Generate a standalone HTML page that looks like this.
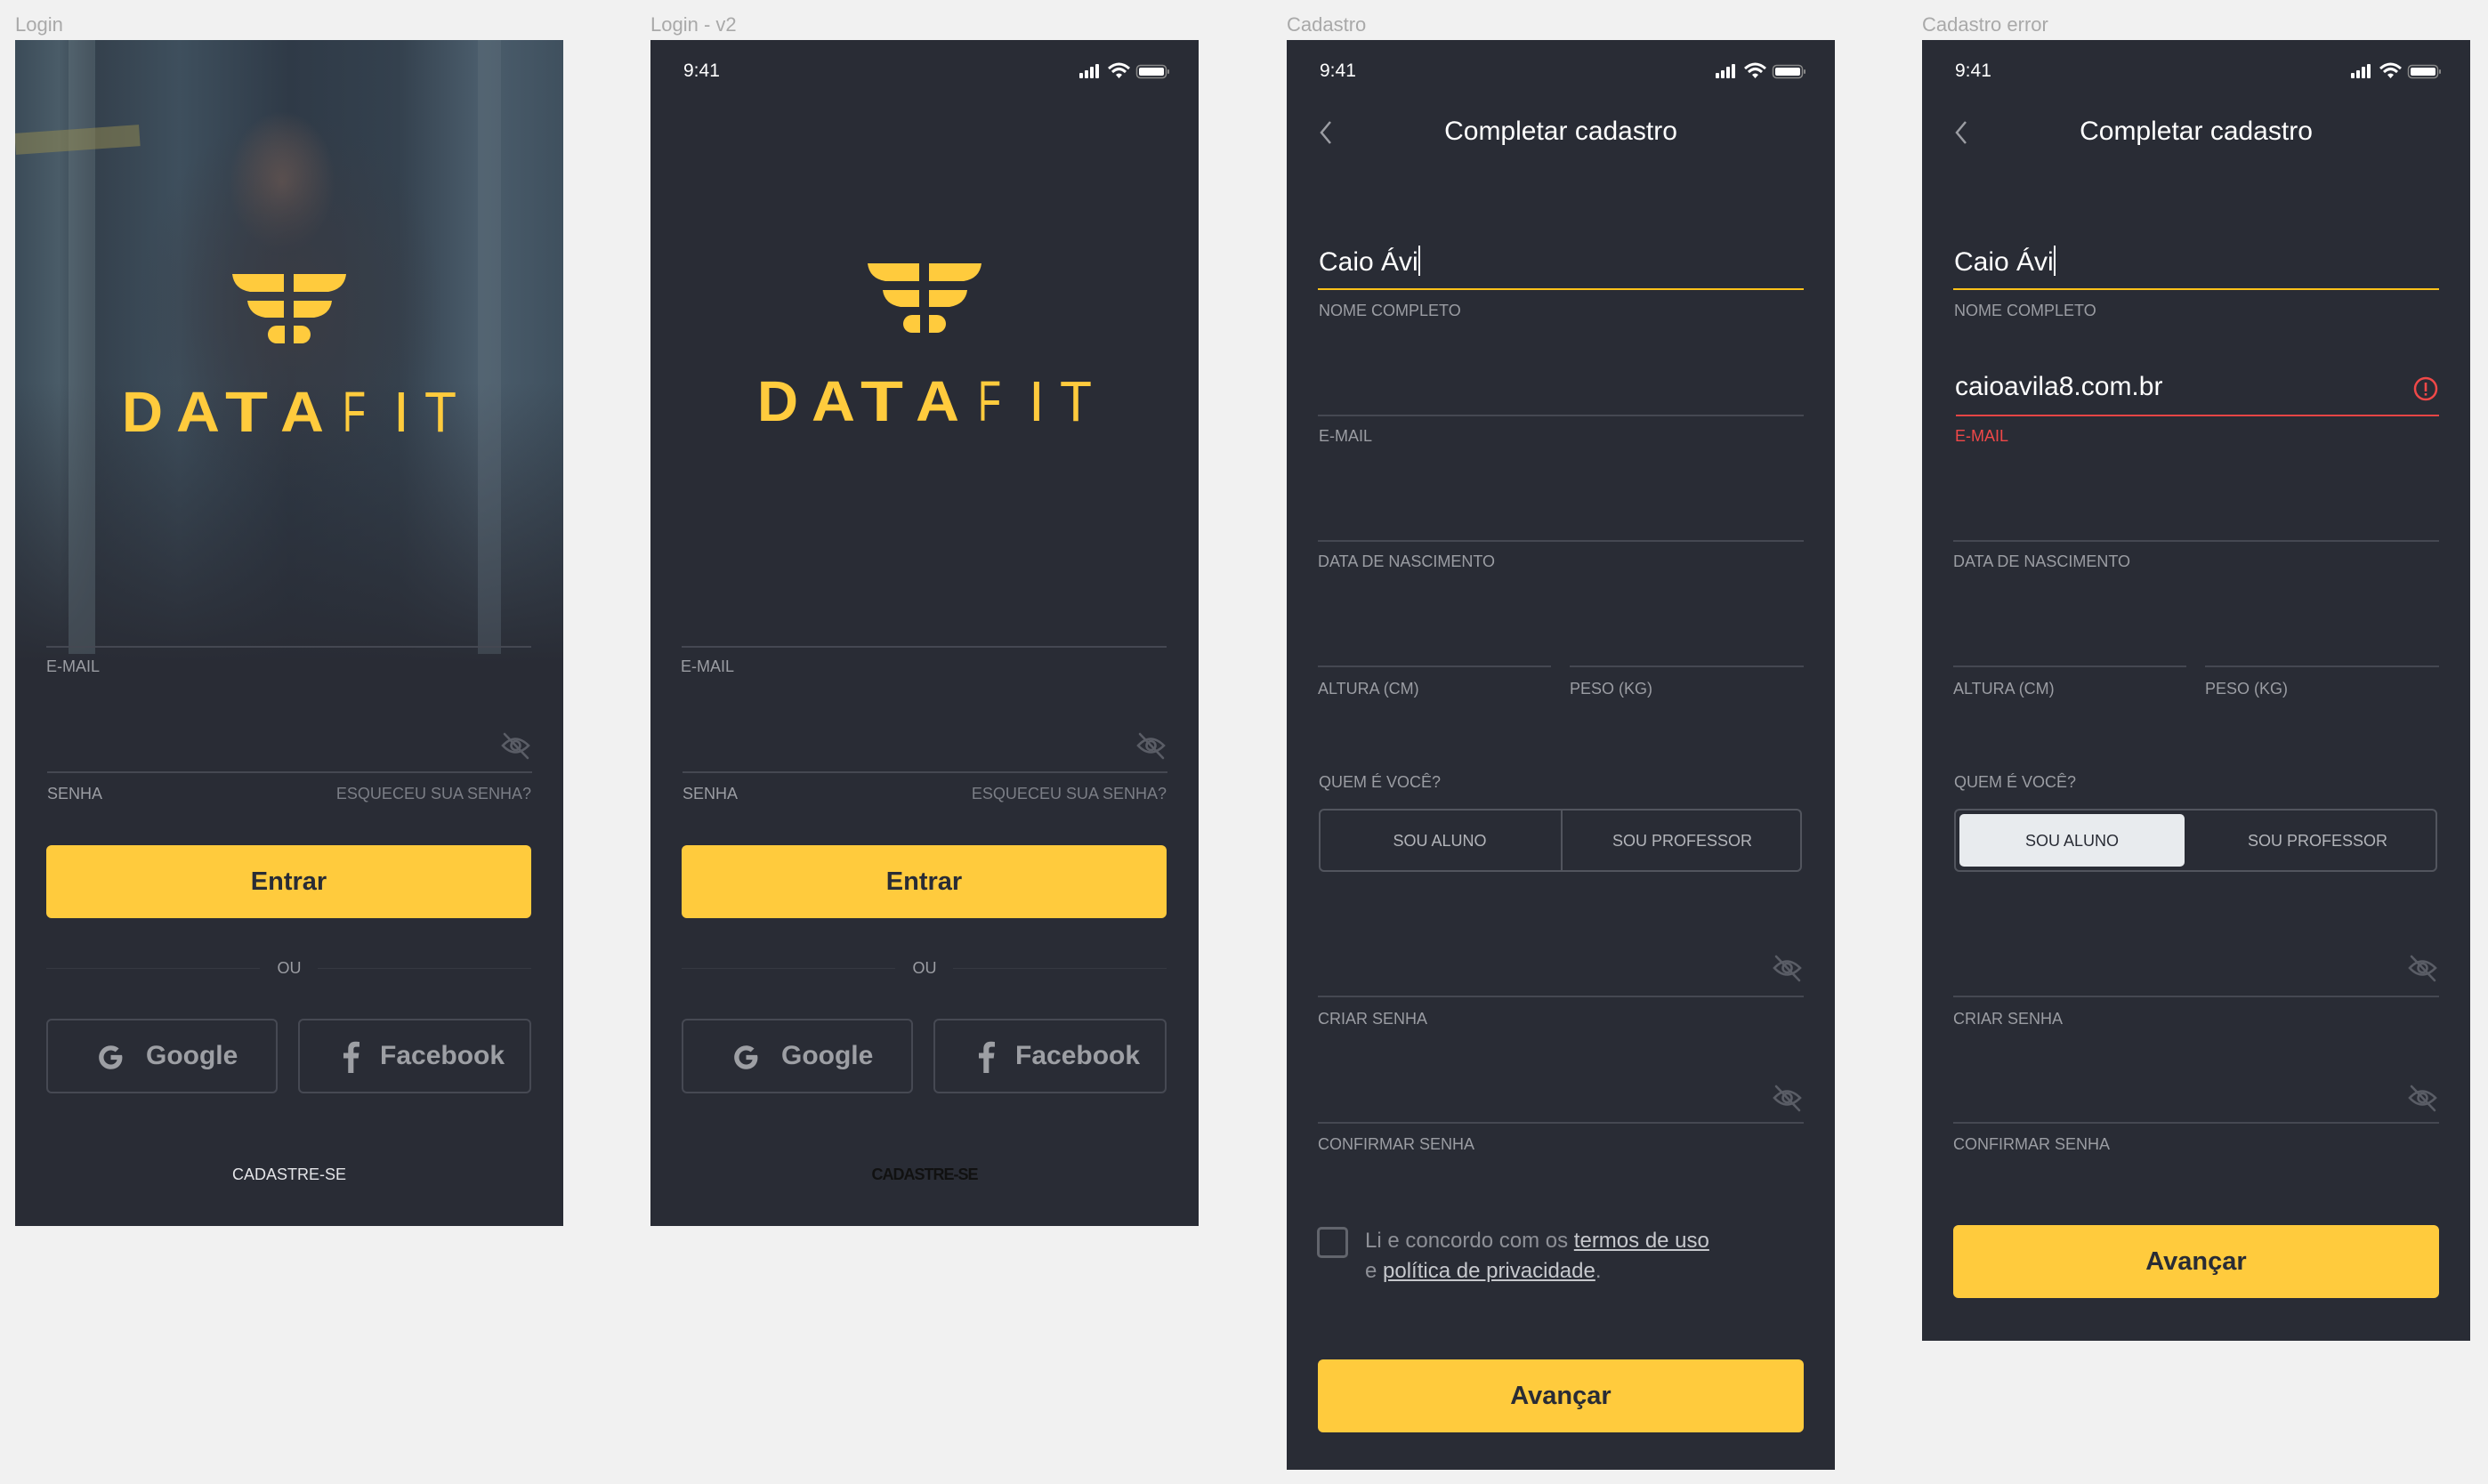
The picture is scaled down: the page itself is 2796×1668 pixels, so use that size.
<!DOCTYPE html>
<html><head><meta charset="utf-8">
<style>
*{margin:0;padding:0;box-sizing:border-box}
body{width:2796px;height:1668px;background:#f1f1f1;position:relative;overflow:hidden;font-family:"Liberation Sans",Arial,sans-serif}
.a{position:absolute}
.cap{position:absolute;top:14px;font-size:22px;color:#a9a9a9;line-height:28px}
.fr{position:absolute;top:45px;width:616px;background:#292c35;overflow:hidden}
.lbl{position:absolute;font-size:18px;line-height:20px;color:#9b9da3;white-space:nowrap}
.ln{position:absolute;height:2px;background:#454852}
.btn{position:absolute;background:#ffcb3d;border-radius:6px;color:#292c35;font-size:29px;font-weight:bold;text-align:center}
.sb{position:absolute;left:37px;top:22px;font-size:21px;color:#fff;line-height:26px}
.ob{position:absolute;border:2px solid #464953;border-radius:6px;top:1100px;height:84px;color:#9d9fa4;font-size:30px;font-weight:bold}
</style></head><body>

<div class="cap" style="left:17px">Login</div>
<div class="cap" style="left:731px">Login - v2</div>
<div class="cap" style="left:1446px">Cadastro</div>
<div class="cap" style="left:2160px">Cadastro error</div>

<svg width="0" height="0" style="position:absolute">
<defs>
<g id="logo">
<path d="M244 251H302V271H264Q246 268 244 251Z M313 251H372Q370 268 352 271H313Z" fill="#ffcb3d"/>
<path d="M261 281H302V300H281Q263 297 261 281Z M313 281H356Q354 297 336 300H313Z" fill="#ffcb3d"/>
<path d="M294 309H303V329H294A10 10 0 0 1 294 309Z M313 309H322A10 10 0 0 1 322 329H313Z" fill="#ffcb3d"/>
<g fill="#ffcb3d" font-family="Liberation Sans,Arial,sans-serif" font-size="64" font-weight="bold">
<text x="120" y="428" textLength="46" lengthAdjust="spacingAndGlyphs">D</text>
<text x="181" y="428" textLength="49" lengthAdjust="spacingAndGlyphs">A</text>
<text x="236" y="428" textLength="48" lengthAdjust="spacingAndGlyphs">T</text>
<text x="298" y="428" textLength="49" lengthAdjust="spacingAndGlyphs">A</text>
</g>
<g fill="#ffcb3d" font-family="Liberation Sans,Arial,sans-serif" font-size="64">
<text x="368" y="428" textLength="26" lengthAdjust="spacingAndGlyphs">F</text>
<text x="425" y="428">I</text>
<text x="460" y="428" textLength="36" lengthAdjust="spacingAndGlyphs">T</text>
</g>
</g>
<g id="eye" fill="none" stroke="#5a5d66" stroke-width="2.6" stroke-linecap="round">
<path d="M2 15Q16 0 31 15Q16 30 2 15Z"/>
<circle cx="16.5" cy="15" r="5"/>
<path d="M4 2L30 29"/>
</g>
<g id="status">
<rect x="482" y="37" width="4" height="6" rx="1" fill="#fff"/>
<rect x="488" y="34" width="4" height="9" rx="1" fill="#fff"/>
<rect x="494" y="30" width="4" height="13" rx="1" fill="#fff"/>
<rect x="500" y="27" width="4" height="16" rx="1" fill="#fff"/>
<path d="M515 32Q526.5 22 538 32" stroke="#fff" stroke-width="3" fill="none"/>
<path d="M519 36Q526.5 29 534 36" stroke="#fff" stroke-width="3" fill="none"/>
<path d="M523 39L526.5 43L530 39Q526.5 36 523 39Z" fill="#fff"/>
<rect x="546.5" y="28.5" width="33" height="14" rx="4" stroke="#888" stroke-width="1.5" fill="none"/>
<rect x="549" y="31" width="28" height="9" rx="2" fill="#fff"/>
<rect x="581" y="33" width="2" height="5" rx="1" fill="#888"/>
</g>
</defs>
</svg>

<!-- FRAME 1 -->
<div class="fr" style="left:17px;height:1333px">
  <div class="a" style="left:0;top:0;width:616px;height:700px;background:
   linear-gradient(180deg,rgba(41,44,53,0) 55%,#292c35 100%),
   radial-gradient(ellipse 170px 220px at 310px 300px,#3a3c44 0%,rgba(40,45,55,0) 100%),
   radial-gradient(ellipse 60px 80px at 300px 160px,#6b5a55 0%,rgba(60,70,80,0) 100%),
   linear-gradient(90deg,#3b4b58 0%,#4a5c68 8%,#34404c 14%,#3e4f5d 30%,#2f3a47 50%,#34414e 70%,#4b5d6c 85%,#3f505e 100%)"></div>
  <div class="a" style="left:60px;top:0;width:30px;height:690px;background:rgba(110,125,135,.35)"></div>
  <div class="a" style="left:520px;top:0;width:26px;height:690px;background:rgba(100,115,125,.35)"></div>
  <div class="a" style="left:0;top:100px;width:140px;height:24px;background:rgba(150,140,80,.5);transform:rotate(-4deg)"></div>
  <svg class="a" style="left:0;top:12px" width="616" height="500"><use href="#logo"/></svg>
  <div class="ln" style="left:35px;top:681px;width:545px"></div>
  <div class="lbl" style="left:35px;top:694px">E-MAIL</div>
  <svg class="a" style="left:546px;top:778px" width="34" height="31"><use href="#eye"/></svg>
  <div class="ln" style="left:36px;top:822px;width:545px"></div>
  <div class="lbl" style="left:36px;top:837px">SENHA</div>
  <div class="lbl" style="right:36px;top:837px;color:#7b7e86">ESQUECEU SUA SENHA?</div>
  <div class="btn" style="left:35px;top:905px;width:545px;height:82px;line-height:82px">Entrar</div>
  <div class="ln" style="left:35px;top:1043px;width:240px;height:1px;background:#363942"></div>
  <div class="ln" style="left:340px;top:1043px;width:240px;height:1px;background:#363942"></div>
  <div class="lbl" style="left:0;width:616px;text-align:center;top:1033px">OU</div>
  <div class="ob" style="left:35px;width:260px">
    <svg class="a" style="left:55px;top:26px" width="31" height="31" viewBox="0 0 24 24"><path d="M21.6 10H12v4h5.5c-.6 2.6-2.8 4.2-5.5 4.2-3.4 0-6.2-2.8-6.2-6.2S8.6 5.8 12 5.8c1.5 0 2.9.6 4 1.5l3-3C17.1 2.6 14.7 1.7 12 1.7 6.3 1.7 1.7 6.3 1.7 12S6.3 22.3 12 22.3c5.9 0 10-4.2 10-10.1 0-.8-.1-1.5-.4-2.2z" fill="#9d9fa4"/></svg>
    <div class="a" style="left:110px;top:20px;line-height:40px">Google</div>
  </div>
  <div class="ob" style="left:318px;width:262px">
    <svg class="a" style="left:48px;top:23px" width="19" height="36" viewBox="0 0 10 19"><path d="M6.5 19V10.3h2.8l.4-3.2H6.5v-2c0-.9.3-1.6 1.6-1.6H10V.6C9.6.5 8.6.4 7.5.4 5 .4 3.3 1.9 3.3 4.7v2.4H.5v3.2h2.8V19z" fill="#9d9fa4"/></svg>
    <div class="a" style="left:90px;top:20px;line-height:40px">Facebook</div>
  </div>
  <div class="lbl" style="left:0;width:616px;text-align:center;top:1265px;color:#e4e5e8">CADASTRE-SE</div>
</div>

<!-- FRAME 2 -->
<div class="fr" style="left:731px;height:1333px">
  <div class="sb">9:41</div>
  <svg class="a" style="left:0;top:0" width="616" height="60"><use href="#status"/></svg>
  <svg class="a" style="left:0;top:0" width="616" height="500"><use href="#logo"/></svg>
  <div class="ln" style="left:35px;top:681px;width:545px"></div>
  <div class="lbl" style="left:34px;top:694px">E-MAIL</div>
  <svg class="a" style="left:546px;top:778px" width="34" height="31"><use href="#eye"/></svg>
  <div class="ln" style="left:36px;top:822px;width:545px"></div>
  <div class="lbl" style="left:36px;top:837px">SENHA</div>
  <div class="lbl" style="right:36px;top:837px;color:#7b7e86">ESQUECEU SUA SENHA?</div>
  <div class="btn" style="left:35px;top:905px;width:545px;height:82px;line-height:82px">Entrar</div>
  <div class="ln" style="left:35px;top:1043px;width:240px;height:1px;background:#363942"></div>
  <div class="ln" style="left:340px;top:1043px;width:240px;height:1px;background:#363942"></div>
  <div class="lbl" style="left:0;width:616px;text-align:center;top:1033px">OU</div>
  <div class="ob" style="left:35px;width:260px">
    <svg class="a" style="left:55px;top:26px" width="31" height="31" viewBox="0 0 24 24"><path d="M21.6 10H12v4h5.5c-.6 2.6-2.8 4.2-5.5 4.2-3.4 0-6.2-2.8-6.2-6.2S8.6 5.8 12 5.8c1.5 0 2.9.6 4 1.5l3-3C17.1 2.6 14.7 1.7 12 1.7 6.3 1.7 1.7 6.3 1.7 12S6.3 22.3 12 22.3c5.9 0 10-4.2 10-10.1 0-.8-.1-1.5-.4-2.2z" fill="#9d9fa4"/></svg>
    <div class="a" style="left:110px;top:20px;line-height:40px">Google</div>
  </div>
  <div class="ob" style="left:318px;width:262px">
    <svg class="a" style="left:48px;top:23px" width="19" height="36" viewBox="0 0 10 19"><path d="M6.5 19V10.3h2.8l.4-3.2H6.5v-2c0-.9.3-1.6 1.6-1.6H10V.6C9.6.5 8.6.4 7.5.4 5 .4 3.3 1.9 3.3 4.7v2.4H.5v3.2h2.8V19z" fill="#9d9fa4"/></svg>
    <div class="a" style="left:90px;top:20px;line-height:40px">Facebook</div>
  </div>
  <div class="lbl" style="left:0;width:616px;text-align:center;top:1265px;color:#111;font-weight:bold;letter-spacing:-1px">CADASTRE-SE</div>
</div>

<!-- FRAME 3 -->
<div class="fr" style="left:1446px;height:1607px">
  <div class="sb">9:41</div>
  <svg class="a" style="left:0;top:0" width="616" height="60"><use href="#status"/></svg>
  <svg class="a" style="left:36px;top:90px" width="16" height="28"><path d="M13 2L3 14L13 26" stroke="#9b9da3" stroke-width="2.5" fill="none"/></svg>
  <div class="a" style="left:0;width:616px;text-align:center;top:85px;font-size:30px;line-height:36px;color:#fff">Completar cadastro</div>
  <div class="a" style="left:36px;top:231px;font-size:30px;line-height:36px;color:#fff">Caio Ávi<span style="display:inline-block;width:2px;height:34px;background:#fff;vertical-align:-6px"></span></div>
  <div class="ln" style="left:35px;top:279px;width:546px;background:#ffc21a"></div>
  <div class="lbl" style="left:36px;top:294px">NOME COMPLETO</div>
  <div class="ln" style="left:35px;top:421px;width:546px"></div>
  <div class="lbl" style="left:36px;top:435px">E-MAIL</div>
  <div class="ln" style="left:35px;top:562px;width:546px"></div>
  <div class="lbl" style="left:35px;top:576px">DATA DE NASCIMENTO</div>
  <div class="ln" style="left:35px;top:703px;width:262px"></div>
  <div class="ln" style="left:318px;top:703px;width:263px"></div>
  <div class="lbl" style="left:35px;top:719px">ALTURA (CM)</div>
  <div class="lbl" style="left:318px;top:719px">PESO (KG)</div>
  <div class="lbl" style="left:36px;top:824px">QUEM É VOCÊ?</div>
  <div class="a" style="left:36px;top:864px;width:543px;height:71px;border:2px solid #52555e;border-radius:6px"></div>
  <div class="a" style="left:308px;top:864px;width:2px;height:71px;background:#52555e"></div>
  <div class="lbl" style="left:36px;width:272px;text-align:center;top:890px;color:#b3b5ba">SOU ALUNO</div>
  <div class="lbl" style="left:310px;width:269px;text-align:center;top:890px;color:#b3b5ba">SOU PROFESSOR</div>
  <svg class="a" style="left:546px;top:1028px" width="34" height="31"><use href="#eye"/></svg>
  <div class="ln" style="left:35px;top:1074px;width:546px"></div>
  <div class="lbl" style="left:35px;top:1090px">CRIAR SENHA</div>
  <svg class="a" style="left:546px;top:1174px" width="34" height="31"><use href="#eye"/></svg>
  <div class="ln" style="left:35px;top:1216px;width:546px"></div>
  <div class="lbl" style="left:35px;top:1231px">CONFIRMAR SENHA</div>
  <div class="a" style="left:34px;top:1334px;width:35px;height:35px;border:3px solid #62656d;border-radius:5px"></div>
  <div class="a" style="left:88px;top:1333px;font-size:24px;line-height:34px;color:#8e9097">Li e concordo com os <span style="color:#c6c8cd;text-decoration:underline">termos de uso</span><br>e <span style="color:#c6c8cd;text-decoration:underline">política de privacidade</span>.</div>
  <div class="btn" style="left:35px;top:1483px;width:546px;height:82px;line-height:82px">Avançar</div>
</div>

<!-- FRAME 4 -->
<div class="fr" style="left:2160px;height:1462px">
  <div class="sb">9:41</div>
  <svg class="a" style="left:0;top:0" width="616" height="60"><use href="#status"/></svg>
  <svg class="a" style="left:36px;top:90px" width="16" height="28"><path d="M13 2L3 14L13 26" stroke="#9b9da3" stroke-width="2.5" fill="none"/></svg>
  <div class="a" style="left:0;width:616px;text-align:center;top:85px;font-size:30px;line-height:36px;color:#fff">Completar cadastro</div>
  <div class="a" style="left:36px;top:231px;font-size:30px;line-height:36px;color:#fff">Caio Ávi<span style="display:inline-block;width:2px;height:34px;background:#fff;vertical-align:-6px"></span></div>
  <div class="ln" style="left:35px;top:279px;width:546px;background:#ffc21a"></div>
  <div class="lbl" style="left:36px;top:294px">NOME COMPLETO</div>
  <div class="a" style="left:37px;top:372px;font-size:30px;line-height:36px;color:#fff">caioavila8.com.br</div>
  <svg class="a" style="left:552px;top:378px" width="28" height="28"><circle cx="14" cy="14" r="12" stroke="#f04848" stroke-width="2.5" fill="none"/><rect x="12.7" y="7" width="2.6" height="10" fill="#f04848"/><rect x="12.7" y="19" width="2.6" height="2.6" fill="#f04848"/></svg>
  <div class="ln" style="left:38px;top:421px;width:543px;background:#e84545"></div>
  <div class="lbl" style="left:37px;top:435px;color:#f04848">E-MAIL</div>
  <div class="ln" style="left:35px;top:562px;width:546px"></div>
  <div class="lbl" style="left:35px;top:576px">DATA DE NASCIMENTO</div>
  <div class="ln" style="left:35px;top:703px;width:262px"></div>
  <div class="ln" style="left:318px;top:703px;width:263px"></div>
  <div class="lbl" style="left:35px;top:719px">ALTURA (CM)</div>
  <div class="lbl" style="left:318px;top:719px">PESO (KG)</div>
  <div class="lbl" style="left:36px;top:824px">QUEM É VOCÊ?</div>
  <div class="a" style="left:36px;top:864px;width:543px;height:71px;border:2px solid #52555e;border-radius:6px"></div>
  <div class="a" style="left:42px;top:870px;width:253px;height:59px;background:#e8ebee;border-radius:5px"></div>
  <div class="lbl" style="left:42px;width:253px;text-align:center;top:890px;color:#292c35">SOU ALUNO</div>
  <div class="lbl" style="left:310px;width:269px;text-align:center;top:890px;color:#b3b5ba">SOU PROFESSOR</div>
  <svg class="a" style="left:546px;top:1028px" width="34" height="31"><use href="#eye"/></svg>
  <div class="ln" style="left:35px;top:1074px;width:546px"></div>
  <div class="lbl" style="left:35px;top:1090px">CRIAR SENHA</div>
  <svg class="a" style="left:546px;top:1174px" width="34" height="31"><use href="#eye"/></svg>
  <div class="ln" style="left:35px;top:1216px;width:546px"></div>
  <div class="lbl" style="left:35px;top:1231px">CONFIRMAR SENHA</div>
  <div class="btn" style="left:35px;top:1332px;width:546px;height:82px;line-height:82px">Avançar</div>
</div>

</body></html>
